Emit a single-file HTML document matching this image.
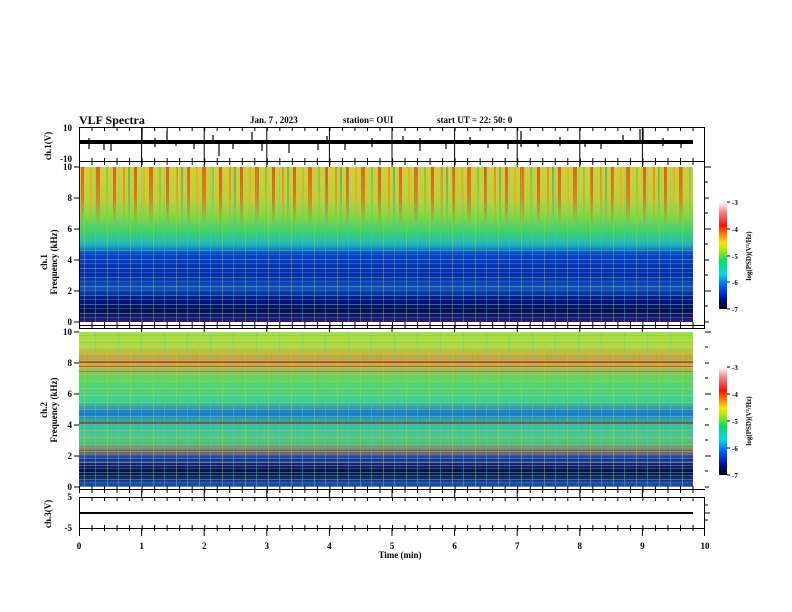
<!DOCTYPE html>
<html><head><meta charset="utf-8"><style>
html,body{margin:0;padding:0;background:#fff;}
svg{display:block;font-family:"Liberation Serif",serif;font-weight:bold;}
</style></head><body>
<svg width="792" height="612" viewBox="0 0 792 612" xmlns="http://www.w3.org/2000/svg">
<defs>
<linearGradient id="g1" x1="0" y1="0" x2="0" y2="1">
<stop offset="0" stop-color="#d0d038"/>
<stop offset="0.2" stop-color="#c0d038"/>
<stop offset="0.32" stop-color="#80d848"/>
<stop offset="0.42" stop-color="#40d070"/>
<stop offset="0.5" stop-color="#20b8b8"/>
<stop offset="0.56" stop-color="#1040c8"/>
<stop offset="0.7" stop-color="#0c28a8"/>
<stop offset="0.78" stop-color="#1850b8"/>
<stop offset="0.84" stop-color="#0a1a90"/>
<stop offset="0.92" stop-color="#060c50"/>
<stop offset="1" stop-color="#302070"/>
</linearGradient>
<linearGradient id="g2" x1="0" y1="0" x2="0" y2="1">
<stop offset="0" stop-color="#a0e040"/>
<stop offset="0.1" stop-color="#b8d840"/>
<stop offset="0.16" stop-color="#c8a040"/>
<stop offset="0.22" stop-color="#b0b848"/>
<stop offset="0.3" stop-color="#60d860"/>
<stop offset="0.45" stop-color="#40d090"/>
<stop offset="0.52" stop-color="#1870d0"/>
<stop offset="0.6" stop-color="#38c0a0"/>
<stop offset="0.7" stop-color="#50c880"/>
<stop offset="0.76" stop-color="#808870"/>
<stop offset="0.82" stop-color="#1030b0"/>
<stop offset="0.9" stop-color="#061048"/>
<stop offset="1" stop-color="#2050c0"/>
</linearGradient>
<linearGradient id="cb" x1="0" y1="1" x2="0" y2="0">
<stop offset="0" stop-color="#000"/>
<stop offset="0.1" stop-color="#0010a0"/>
<stop offset="0.22" stop-color="#0060ff"/>
<stop offset="0.33" stop-color="#00d8e8"/>
<stop offset="0.45" stop-color="#00e060"/>
<stop offset="0.55" stop-color="#a0f000"/>
<stop offset="0.62" stop-color="#ffe000"/>
<stop offset="0.7" stop-color="#ff8000"/>
<stop offset="0.78" stop-color="#ff1000"/>
<stop offset="0.9" stop-color="#f08080"/>
<stop offset="1" stop-color="#fff"/>
</linearGradient>
<linearGradient id="fade" x1="0" y1="0" x2="0" y2="1">
<stop offset="0" stop-color="#fff" stop-opacity="1"/>
<stop offset="0.2" stop-color="#fff" stop-opacity="0.7"/>
<stop offset="0.38" stop-color="#fff" stop-opacity="0"/>
</linearGradient>
<mask id="m1"><rect x="79" y="167" width="614" height="155" fill="url(#fade)"/></mask>
<pattern id="st" patternUnits="userSpaceOnUse" x="79" y="0" width="53" height="10">
<rect x="2" width="3" height="10" fill="#e82010"/>
<rect x="11" width="2" height="10" fill="#f0a020"/>
<rect x="17" width="4" height="10" fill="#e83010"/>
<rect x="27" width="2" height="10" fill="#60c060"/>
<rect x="34" width="3" height="10" fill="#e02010"/>
<rect x="44" width="2" height="10" fill="#f07020"/>
<rect x="49" width="2" height="10" fill="#40a080"/>
</pattern>
<pattern id="hl" patternUnits="userSpaceOnUse" x="0" y="250" width="10" height="9">
<rect y="0" width="10" height="1" fill="#40c8c0"/>
<rect y="4" width="10" height="1" fill="#2090d0"/>
</pattern>
<pattern id="vl" patternUnits="userSpaceOnUse" x="79" y="0" width="23" height="10">
<rect x="5" width="1" height="10" fill="#a0e040"/>
<rect x="16" width="1" height="10" fill="#40d0c0"/>
</pattern>
<pattern id="hl2" patternUnits="userSpaceOnUse" x="0" y="332" width="10" height="7">
<rect y="0" width="10" height="1" fill="#e0d040"/>
<rect y="3" width="10" height="1" fill="#40c8b0"/>
</pattern>
<pattern id="tk" patternUnits="userSpaceOnUse" x="79" y="0" width="12.52" height="10">
<rect x="0" width="1" height="10" fill="#000"/>
</pattern>
</defs>

<text x="79" y="124" font-size="12">VLF Spectra</text>
<text x="250" y="123" font-size="9">Jan. 7 , 2023</text>
<text x="343" y="123" font-size="9">station= OUI</text>
<text x="437" y="123" font-size="9">start UT =   22: 50: 0</text>

<rect x="79" y="167" width="614" height="155" fill="url(#g1)"/>
<rect x="79" y="167" width="614" height="155" fill="url(#st)" mask="url(#m1)" opacity="0.65"/>
<rect x="79" y="250" width="614" height="72" fill="url(#hl)" opacity="0.5"/>
<rect x="79" y="167" width="614" height="155" fill="url(#vl)" opacity="0.35"/>

<rect x="79" y="332" width="614" height="155" fill="url(#g2)"/>
<rect x="79" y="332" width="614" height="155" fill="url(#hl2)" opacity="0.35"/>
<rect x="79" y="332" width="614" height="155" fill="url(#vl)" opacity="0.4"/>
<rect x="79" y="361" width="614" height="2" fill="#e03010" opacity="0.8"/>
<rect x="79" y="366" width="614" height="1" fill="#e03010" opacity="0.8"/>
<rect x="79" y="371" width="614" height="1" fill="#e03010" opacity="0.5"/>
<rect x="79" y="422" width="614" height="2" fill="#903020" opacity="0.7"/>
<rect x="79" y="450" width="614" height="1" fill="#c03020" opacity="0.7"/>
<rect x="79" y="462" width="614" height="1" fill="#a0a040" opacity="0.7"/>

<g fill="none" stroke="#000" stroke-width="1">
<rect x="79.5" y="127.5" width="625" height="34"/>
<rect x="79.5" y="161.5" width="625" height="167"/>
<line x1="79" y1="325.5" x2="705" y2="325.5"/>
<line x1="79" y1="489.5" x2="705" y2="489.5"/>
<rect x="79.5" y="497.5" width="625" height="31"/>
</g>
<rect x="79" y="128" width="626" height="3" fill="url(#tk)"/>
<rect x="79" y="158" width="626" height="3" fill="url(#tk)"/>
<rect x="79" y="162" width="626" height="3" fill="url(#tk)"/>
<rect x="79" y="322" width="626" height="3" fill="url(#tk)"/>
<rect x="79" y="326" width="626" height="3" fill="url(#tk)"/>
<rect x="79" y="486" width="626" height="3" fill="url(#tk)"/>
<rect x="79" y="490" width="626" height="3" fill="url(#tk)"/>
<rect x="79" y="498" width="626" height="3" fill="url(#tk)"/>
<rect x="79" y="525" width="626" height="3" fill="url(#tk)"/>
<rect x="79" y="528" width="626" height="3" fill="url(#tk)"/>
<g stroke="#000" stroke-width="1">
<path d="M141.6 128V161M204.2 128V161M266.8 128V161M329.4 128V161M392 128V161M454.6 128V161M517.2 128V161M579.8 128V161M642.4 128V161"/>
<path d="M141.6 162V167M204.2 162V167M266.8 162V167M329.4 162V167M392 162V167M454.6 162V167M517.2 162V167M579.8 162V167M642.4 162V167"/>
<path d="M141.6 326V332M204.2 326V332M266.8 326V332M329.4 326V332M392 326V332M454.6 326V332M517.2 326V332M579.8 326V332M642.4 326V332"/>
<path d="M141.6 490V497M204.2 490V497M266.8 490V497M329.4 490V497M392 490V497M454.6 490V497M517.2 490V497M579.8 490V497M642.4 490V497"/>
<path d="M79.5 528V536M141.6 528V536M204.2 528V536M266.8 528V536M329.4 528V536M392 528V536M454.6 528V536M517.2 528V536M579.8 528V536M642.4 528V536M704.5 528V536"/>
<path d="M705 167h6M705 198h4M705 229h6M705 260h4M705 291h6M705 322h4M705 182h3M705 213h3M705 244h3M705 275h3M705 306h3"/>
<path d="M705 332h6M705 363h4M705 394h6M705 425h4M705 456h6M705 487h4M705 347h3M705 378h3M705 409h3M705 440h3M705 471h3"/>
<path d="M705 505h3M705 513h5M705 520h3"/>
<path d="M74 167h5M74 198h5M74 229h5M74 260h5M74 291h5M74 322h5M74 332h5M74 363h5M74 394h5M74 425h5M74 456h5M74 487h5"/>
</g>

<rect x="80" y="140" width="613" height="4" fill="#000"/>
<g stroke="#000" stroke-width="1.2">
<path d="M89 138v11M104 140v10M111 144v7M142 129v13M155 138v9M167 131v10M176 140v6M194 140v9M213 135v7M219 144v12M233 142v7M252 132v10M262 142v9M289 140v13M318 141v9M327 136v7M345 144v6M372 138v9M403 136v8M420 138v13M446 142v7M470 137v8M488 140v8M508 140v9M521 131v16M538 141v6M560 137v9M585 140v7M601 140v9M623 135v9M640 129v13M643 129v13M663 138v8M681 140v8"/>
</g>
<rect x="80" y="512" width="613" height="2" fill="#000"/>

<g font-size="9" text-anchor="end">
<text x="72" y="131">10</text><text x="72" y="162">-10</text>
<text x="72" y="170">10</text><text x="72" y="201">8</text><text x="72" y="232">6</text><text x="72" y="263">4</text><text x="72" y="294">2</text><text x="72" y="325">0</text>
<text x="72" y="335">10</text><text x="72" y="366">8</text><text x="72" y="397">6</text><text x="72" y="428">4</text><text x="72" y="459">2</text><text x="72" y="490">0</text>
<text x="72" y="500">5</text><text x="72" y="531">-5</text>
</g>
<g font-size="9">
<text transform="translate(51,160) rotate(-90)">ch.1(V)</text>
<text transform="translate(47,262) rotate(-90)" text-anchor="middle">ch.1</text>
<text transform="translate(57,262) rotate(-90)" text-anchor="middle">Frequency  (kHz)</text>
<text transform="translate(47,410) rotate(-90)" text-anchor="middle">ch.2</text>
<text transform="translate(57,410) rotate(-90)" text-anchor="middle">Frequency  (kHz)</text>
<text transform="translate(51,528) rotate(-90)">ch.3(V)</text>
</g>
<g font-size="9" text-anchor="middle">
<text x="79" y="549">0</text><text x="141.6" y="549">1</text><text x="204.2" y="549">2</text><text x="266.8" y="549">3</text><text x="329.4" y="549">4</text><text x="392" y="549">5</text><text x="454.6" y="549">6</text><text x="517.2" y="549">7</text><text x="579.8" y="549">8</text><text x="642.4" y="549">9</text><text x="705" y="549">10</text>
<text x="400" y="558">Time  (min)</text>
</g>

<rect x="719" y="202" width="8" height="107" fill="url(#cb)"/>
<rect x="719" y="367" width="8" height="108" fill="url(#cb)"/>
<g stroke="#000"><path d="M727 202h3M727 229h3M727 256h3M727 282h3M727 309h3M727 367h3M727 394h3M727 421h3M727 448h3M727 475h3"/></g>
<g font-size="7">
<text x="732" y="205">-3</text><text x="732" y="232">-4</text><text x="732" y="259">-5</text><text x="732" y="285">-6</text><text x="732" y="312">-7</text>
<text x="732" y="370">-3</text><text x="732" y="397">-4</text><text x="732" y="424">-5</text><text x="732" y="451">-6</text><text x="732" y="478">-7</text>
<text transform="translate(751,256) rotate(-90)" text-anchor="middle">log(PSD)(V²/Hz)</text>
<text transform="translate(751,421) rotate(-90)" text-anchor="middle">log(PSD)(V²/Hz)</text>
</g>
</svg>
</body></html>
